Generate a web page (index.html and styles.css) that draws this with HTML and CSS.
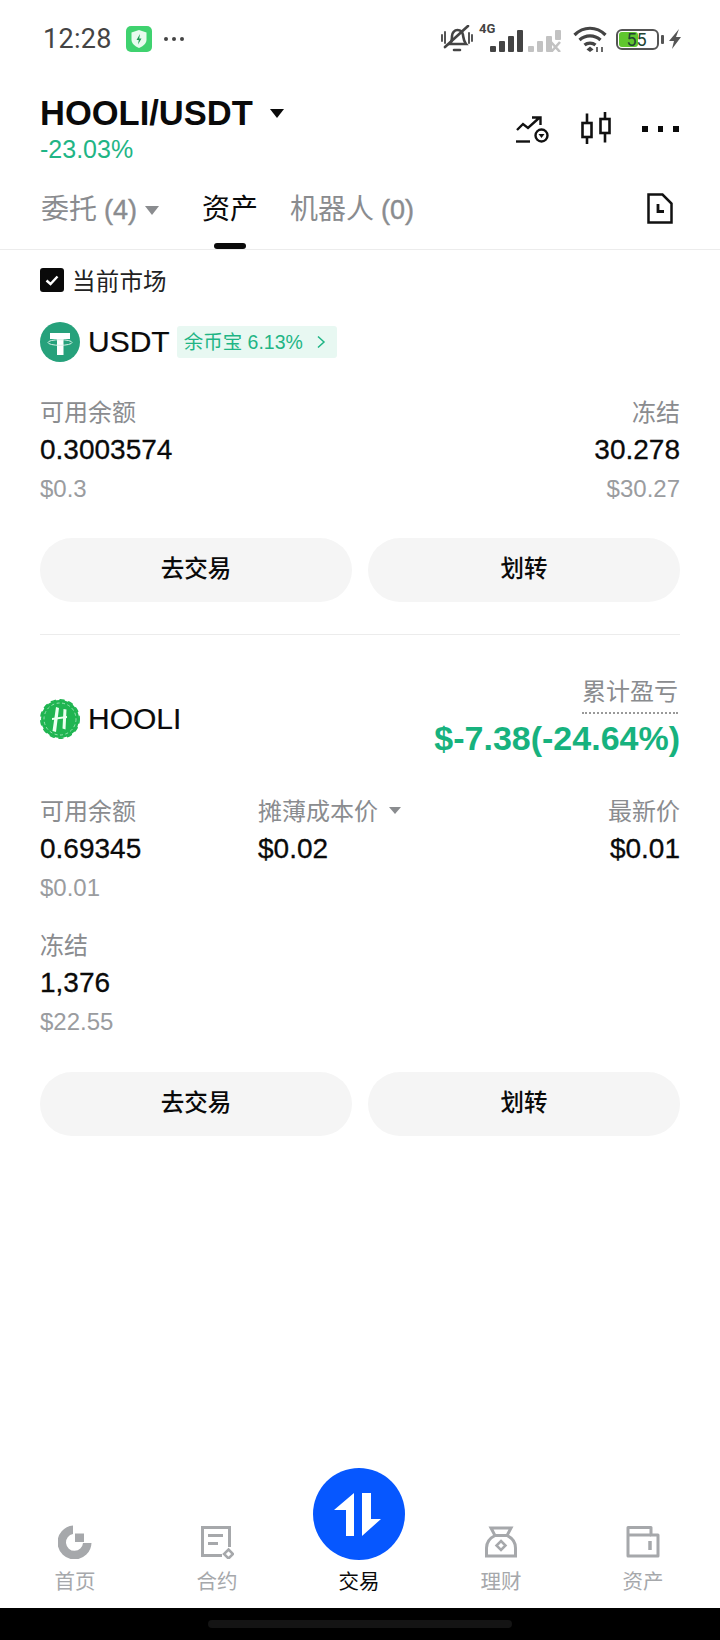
FILE: index.html
```html
<!DOCTYPE html>
<html lang="zh-CN">
<head>
<meta charset="utf-8">
<title>HOOLI/USDT</title>
<link rel="stylesheet" href="styles.css">
</head>
<body>
<div class="page">
  <div class="status">
    <span class="time">12:28</span>
    <svg class="shield" viewBox="0 0 26 26"><rect width="26" height="26" rx="5" fill="#3fd26f"/><path d="M13 4l7.500 2.500v7c0 4-3.200 6.800-7.500 8.500-4.300-1.700-7.500-4.500-7.500-8.500v-7z" fill="#e9fbee"/><path d="M14 8l-3.500 6h2.300l-.8 4.500 3.500-6h-2.300z" fill="#1f9d55"/></svg>
    <span class="sdots"><i></i><i></i><i></i></span>
    <span class="status-right">
      <svg class="s-bell" viewBox="0 0 32 28" fill="none" stroke="#444" stroke-width="2.600"><path d="M9 19c2-2 2-5 2-8 0-3 2.500-6 5.500-6s5 2 5.500 5c.5 3 .5 6 3 9z"/><path d="M13 25h6M4 22L27 1" stroke-linecap="round"/><path d="M1 10v6M4 7v11M28 8v10M31 10v6" stroke-linecap="round" stroke-width="1.800"/></svg>
      <span class="s-net"><b>4G</b>
        <svg viewBox="0 0 33 22" fill="#444"><rect x="0" y="16" width="6" height="6" rx="1"/><rect x="9" y="11" width="6" height="11" rx="1"/><rect x="18" y="6" width="6" height="16" rx="1"/><rect x="27" y="0" width="6" height="22" rx="1"/></svg>
      </span>
      <svg class="s-sig2" viewBox="0 0 33 22" fill="#c2c2c2"><rect x="0" y="16" width="6" height="6" rx="1"/><rect x="9" y="11" width="6" height="11" rx="1"/><rect x="18" y="6" width="6" height="16" rx="1"/><rect x="27" y="0" width="6" height="10" rx="1"/><path d="M23 12l9 10M32 12l-9 10" stroke="#c2c2c2" stroke-width="2.600"/></svg>
      <svg class="s-wifi" viewBox="0 0 34 26" fill="none" stroke="#444" stroke-width="3.200"><path d="M1.500 9c9-9 22-9 31 0M6.500 14c6-5.500 15-5.500 21 0M11.500 19c3-2.500 8-2.500 11 0"/><path d="M17 20.500l3.500 3-3.500 2.500-3.500-2.500z" fill="#444" stroke="none"/><path d="M24 21v5M29 21v5" stroke-width="1.600"/></svg>
      <span class="s-batt"><span class="s-fill"></span><span class="s-num">55</span></span><span class="s-cap"></span>
      <svg class="s-bolt" viewBox="0 0 14 20"><path d="M11 0L1 12h5l-2 8 9-12H8z" fill="#555"/></svg>
    </span>
  </div>

  <header class="head">
    <div>
      <div class="title">HOOLI/USDT<span class="caret-lg"></span></div>
      <div class="change">-23.03%</div>
    </div>
    <div class="head-icons">
      <svg class="ic-alert" viewBox="0 0 33 27" fill="none" stroke="#111" stroke-width="2.400"><path d="M1 14l6-6 5 4 11-10M16 1.500h8.500V9"/><path d="M0 25.500h14"/><circle cx="25.500" cy="19.500" r="6"/><path d="M22.500 18h6L25.500 22z" fill="#111" stroke="none"/></svg>
      <svg class="ic-candle" viewBox="0 0 30 32" fill="none" stroke="#111" stroke-width="2.600"><rect x="1.500" y="11" width="9" height="14"/><path d="M6 1.500v9.500M6 25v7"/><rect x="19.500" y="7" width="9" height="14"/><path d="M24 0v7M24 21v9.500"/></svg>
      <span class="ic-more"><i></i><i></i><i></i></span>
    </div>
  </header>

  <nav class="tabs">
    <span class="tab first"><span>委托</span><em>(4)</em><span class="caret-md"></span></span>
    <span class="tab active">资产</span>
    <span class="tab"><span>机器人</span><em>(0)</em></span>
    <svg class="ic-doc" viewBox="0 0 26 31" fill="none" stroke="#111" stroke-width="2.500"><path d="M1.500 1.500h14l9 9v19h-23z"/><path d="M11 11v7.500h6" stroke-width="2.800"/></svg>
  </nav>

  <main class="main">
    <label class="market">
      <svg class="check" viewBox="0 0 24 24"><rect width="24" height="24" rx="3" fill="#0a0a0a"/><path d="M6.500 12.500l4 3.500 7-7.500" fill="none" stroke="#fff" stroke-width="2.400"/></svg>
      <span>当前市场</span>
    </label>

    <div class="coin-row first">
      <svg class="coin" viewBox="0 0 40 40"><circle cx="20" cy="20" r="20" fill="#26a17b"/><path d="M10 11h20v6h-6.500v16h-6.500V17H10z" fill="#fff"/><ellipse cx="20" cy="20.500" rx="12" ry="2.800" fill="none" stroke="#d6f0e6" stroke-width="1"/></svg>
      <span class="coin-name">USDT</span>
      <span class="badge">余币宝 6.13%<svg class="chev" viewBox="0 0 10 14" fill="none" stroke="#1fb585" stroke-width="1.500"><path d="M2 1.500L8 7l-6 5.500"/></svg></span>
    </div>

    <div class="cols">
      <div class="col">
        <div class="lbl">可用余额</div>
        <div class="val">0.3003574</div>
        <div class="sub">$0.3</div>
      </div>
      <div class="col end">
        <div class="lbl">冻结</div>
        <div class="val">30.278</div>
        <div class="sub">$30.27</div>
      </div>
    </div>

    <div class="btns">
      <span class="btn">去交易</span>
      <span class="btn">划转</span>
    </div>

    <div class="divider"></div>

    <div class="coin-row second">
      <svg class="coin" viewBox="0 0 40 40"><circle cx="20" cy="20" r="19" fill="#1fb551"/><circle cx="20" cy="20" r="19.200" fill="none" stroke="#1fb551" stroke-width="1.600" stroke-linecap="round" stroke-dasharray="4 5"/><circle cx="20" cy="20" r="16" fill="none" stroke="#c6f2d5" stroke-width=".7" stroke-dasharray="3 2.500"/><path d="M16 8l3 1-3 24-3.500-1zM23.500 10l3 .5-1 20-3-1z" fill="#eafff0"/><path d="M12 19l15-2v2l-15 2z" fill="#eafff0"/></svg>
      <span class="coin-name">HOOLI</span>
      <div class="pnl">
        <span class="pnl-lbl">累计盈亏</span>
        <span class="pnl-val">$-7.38(-24.64%)</span>
      </div>
    </div>

    <div class="cols three">
      <div class="col">
        <div class="lbl">可用余额</div>
        <div class="val">0.69345</div>
        <div class="sub">$0.01</div>
      </div>
      <div class="col">
        <div class="lbl">摊薄成本价<span class="caret-sm"></span></div>
        <div class="val">$0.02</div>
      </div>
      <div class="col end">
        <div class="lbl">最新价</div>
        <div class="val">$0.01</div>
      </div>
    </div>

    <div class="col frozen">
      <div class="lbl">冻结</div>
      <div class="val">1,376</div>
      <div class="sub">$22.55</div>
    </div>

    <div class="btns">
      <span class="btn">去交易</span>
      <span class="btn">划转</span>
    </div>
  </main>

  <nav class="bottom">
    <div class="nav-item">
      <svg class="nav-ic" viewBox="0 0 34 34"><path d="M15 .5A17 17 0 1 0 33.500 18H25A8.500 8.500 0 1 1 15 9z" fill="#a6a8ab"/><path d="M17 8.500h9V17h-9z" fill="#a6a8ab"/></svg>
      <span>首页</span>
    </div>
    <div class="nav-item">
      <svg class="nav-ic" viewBox="0 0 34 34" fill="none" stroke="#a6a8ab" stroke-width="3"><path d="M29.500 22V2.500h-27v28H22"/><path d="M8 10.500h15M8 18.500h10"/><path d="M28.500 24.500l4.500 4.500-4.500 4.500-4.500-4.500z" stroke-width="2.500"/></svg>
      <span>合约</span>
    </div>
    <div class="nav-item on">
      <span class="fab"><svg viewBox="0 0 92 92" fill="#fff"><path d="M41 25L21 42h12v26h8z"/><path d="M49 68l19-17H58V25h-9z"/></svg></span>
      <span>交易</span>
    </div>
    <div class="nav-item">
      <svg class="nav-ic" viewBox="0 0 34 34" fill="none" stroke="#a6a8ab" stroke-width="3"><path d="M7 3h20l-4 7.500c5 2.500 8.500 7 8.500 12.500v8h-29v-8c0-5.500 3.500-10 8.500-12.500z"/><path d="M11 10.500h12"/><path d="M17 16l4.500 4.500-4.500 4.500-4.500-4.500z" stroke-width="2.500"/></svg>
      <span>理财</span>
    </div>
    <div class="nav-item">
      <svg class="nav-ic" viewBox="0 0 34 34" fill="none" stroke="#a6a8ab" stroke-width="3"><path d="M2 31V2.500h23V10h7v21z" stroke-linejoin="round"/><path d="M2 10h23"/><path d="M24 16v9" stroke-width="3.500"/></svg>
      <span>资产</span>
    </div>
  </nav>

  <div class="homebar"><span></span></div>
</div>
</body>
</html>
```
FILE: styles.css
```css
* { box-sizing: border-box; }
html, body { margin: 0; padding: 0; background: #fff; }
body { font-family: "Liberation Sans", "Noto Sans CJK SC", sans-serif; color: #0a0a0a; }
.page { width: 720px; height: 1640px; display: flex; flex-direction: column; overflow: hidden; background: #fff; }

/* status bar */
.status { height: 78px; padding: 0 0 0 43px; display: flex; align-items: center; color: #444; flex: none; }
.time { font: 400 27px/1 Roboto, sans-serif; letter-spacing: .3px; width: 83px; }
.shield { width: 26px; height: 26px; }
.sdots { display: flex; gap: 4px; margin-left: 12px; }
.sdots i { width: 4px; height: 4px; border-radius: 50%; background: #444; display: block; }
.status-right { margin-left: auto; display: flex; align-items: center; padding-right: 38px; }
.s-bell { width: 32px; height: 28px; }
.s-net { position: relative; width: 44px; height: 26px; margin-left: 6px; display: block; }
.s-net b { position: absolute; left: 0; top: -4px; font: 700 13px/14px Roboto, sans-serif; color: #444; }
.s-net svg { position: absolute; right: 0; bottom: 0; width: 33px; height: 22px; }
.s-sig2 { width: 33px; height: 22px; margin-left: 5px; margin-top: 4px; }
.s-wifi { width: 34px; height: 26px; margin-left: 12px; }
.s-batt { position: relative; width: 43px; height: 21px; margin-left: 9px; border: 2px solid #555; border-radius: 6px; display: block; }
.s-fill { display: block; position: absolute; left: 1px; top: 1px; bottom: 1px; width: 19px; background: #5fc62e; border-radius: 3px; }
.s-num { position: absolute; inset: 0; left: 6px; right: 8px; text-align: center; font: 400 18px/17px Roboto, sans-serif; color: #243; }
.s-cap { width: 3px; height: 9px; margin-left: 2px; background: #555; border-radius: 1px; }
.s-bolt { width: 14px; height: 20px; margin-left: 4px; }

/* header */
.head { flex: none; display: flex; justify-content: space-between; padding: 15px 40px 0; height: 90px; }
.title { font: 700 34.500px/40px "Liberation Sans", sans-serif; color: #0a0a0a; display: flex; align-items: center; }
.caret-lg { width: 0; height: 0; border-left: 7px solid transparent; border-right: 7px solid transparent; border-top: 9px solid #0a0a0a; margin-left: 17px; }
.change { font: 400 25px/26px "Liberation Sans", sans-serif; color: #1fb585; margin-top: 3px; }
.head-icons { display: flex; align-items: center; height: 40px; margin-top: 16px; margin-right: 1.500px; }
.ic-alert { width: 33px; height: 27px; }
.ic-candle { width: 30px; height: 32px; margin-left: 32px; margin-top: -2px; }
.ic-more { display: flex; gap: 10px; margin-left: 31px; }
.ic-more i { width: 5.500px; height: 5.500px; background: #0a0a0a; display: block; }

/* tabs */
.tabs { flex: none; position: relative; height: 82px; display: flex; align-items: center; padding: 3px 40px 0; border-bottom: 1px solid #ececec; }
.tab { position: relative; font: 400 28px/34px "Liberation Sans", "Noto Sans CJK SC", sans-serif; color: #8a8c8f; display: flex; align-items: center; white-space: pre; margin-right: 32px; }
.tab.first { margin-right: 43px; margin-left: 1px; }
.tab em { font-style: normal; font-size: 27px; margin-left: 7px; -webkit-text-stroke: .4px #8a8c8f; }
.tab.active { color: #0a0a0a; }
.tab.active::after { content: ""; position: absolute; left: 12px; bottom: -22px; width: 32px; height: 6px; background: #0a0a0a; border-radius: 3px; }
.caret-md { width: 0; height: 0; border-left: 7px solid transparent; border-right: 7px solid transparent; border-top: 9px solid #8a8c8f; margin-left: 8px; }
.ic-doc { width: 26px; height: 31px; margin-left: auto; margin-right: 7px; margin-top: -3px; }

/* main */
.main { flex: 1; padding: 0 40px; min-height: 0; }
.market { display: flex; align-items: center; height: 24px; margin-top: 18px; font: 400 23.500px/24px "Noto Sans CJK SC", sans-serif; color: #222; letter-spacing: .2px; }
.check { width: 24px; height: 24px; margin-right: 8px; }

.coin-row { display: flex; align-items: center; }
.coin-row.first { margin-top: 30px; height: 40px; }
.coin-row.second { margin-top: 40px; height: 88px; }
.coin { width: 40px; height: 40px; flex: none; }
.coin-name { font: 400 30px/40px "Liberation Sans", sans-serif; margin-left: 8px; color: #0a0a0a; -webkit-text-stroke: .2px #0a0a0a; }
.badge { height: 32px; margin-left: 7px; padding: 0 7px; width: 160px; background: #e8f8f2; border-radius: 3px; color: #1fb585; font: 400 19.500px/32px "Liberation Sans", "Noto Sans CJK SC", sans-serif; display: flex; align-items: center; justify-content: space-between; }
.chev { width: 10px; height: 14px; margin-right: 4px; }

.cols { display: flex; justify-content: space-between; margin-top: 30px; }
.cols.three { margin-top: 28px; }
.cols.three .col:nth-child(1) { width: 218px; }
.cols.three .col:nth-child(2) { flex: 1; }
.col.end { text-align: right; }
.lbl { font: 400 24px/38px "Noto Sans CJK SC", sans-serif; color: #8a8c8f; display: flex; align-items: center; }
.col.end .lbl { justify-content: flex-end; }
.val { font: 400 28px/39px "Liberation Sans", sans-serif; color: #0a0a0a; -webkit-text-stroke: .3px #0a0a0a; }
.sub { font: 400 24px/39px "Liberation Sans", sans-serif; color: #9a9c9f; }
.caret-sm { width: 0; height: 0; border-left: 6px solid transparent; border-right: 6px solid transparent; border-top: 7px solid #8a8c8f; margin-left: 11px; }
.frozen { margin-top: 18px; margin-bottom: 31px; }
.frozen + .btns { margin-top: 31px; }

.btns { display: flex; gap: 16px; margin-top: 30px; }
.btn { flex: 1; height: 64px; border-radius: 32px; background: #f5f5f5; text-align: center; font: 500 23.500px/59px "Noto Sans CJK SC", sans-serif; color: #0a0a0a; }
.divider { height: 1px; background: #ececec; margin-top: 32px; }

.pnl { margin-left: auto; display: flex; flex-direction: column; align-items: flex-end; padding-bottom: 3px; }
.pnl-lbl { font: 400 24px/28px "Noto Sans CJK SC", sans-serif; color: #8a8c8f; border-bottom: 2px dotted #999; padding-bottom: 8px; margin-right: 2px; }
.pnl-val { font: 700 34px/44px "Liberation Sans", sans-serif; color: #17b27e; margin-top: 2px; }

/* bottom nav */
.bottom { flex: none; height: 160px; display: grid; grid-template-columns: repeat(5, 1fr); padding: 0 6px 0 4px; margin-top: -50px; }
.nav-item { display: flex; flex-direction: column; align-items: center; justify-content: flex-end; padding-bottom: 15px; color: #a6a8ab; font: 400 20.500px/26px "Noto Sans CJK SC", sans-serif; }
.nav-item.on { color: #0a0a0a; }
.nav-ic { width: 34px; height: 34px; margin-bottom: 8px; }
.fab { width: 92px; height: 92px; border-radius: 50%; background: #0657ff; display: block; margin-bottom: 7px; }
.fab svg { width: 92px; height: 92px; display: block; }
.homebar { flex: none; height: 32px; background: #000; display: flex; justify-content: center; align-items: center; }
.homebar span { width: 304px; height: 8px; border-radius: 4px; background: #141414; }
```
